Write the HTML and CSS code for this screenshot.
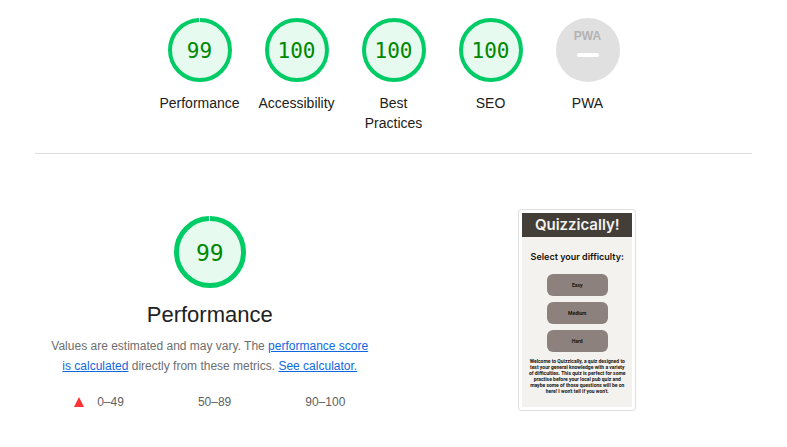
FILE: index.html
```
<!DOCTYPE html>
<html lang="en">
<head>
<meta charset="utf-8">
<title>Performance report</title>
<link rel="stylesheet" href="styles.css">
</head>
<body>
<main class="report">
  <nav class="scores" aria-label="Scores">
    <a class="score" href="#performance">
      <span class="gauge">
        <svg viewBox="0 0 64 64" aria-hidden="true"><circle class="disc" cx="32" cy="32" r="30"/><circle class="arc" cx="32" cy="32" r="30" pathLength="100" stroke-dasharray="99.5 0.5" transform="rotate(-90 32 32)"/></svg>
        <span class="value">99</span>
      </span>
      <span class="label">Performance</span>
    </a>
    <a class="score" href="#accessibility">
      <span class="gauge">
        <svg viewBox="0 0 64 64" aria-hidden="true"><circle class="disc" cx="32" cy="32" r="30"/><circle class="arc" cx="32" cy="32" r="30"/></svg>
        <span class="value">100</span>
      </span>
      <span class="label">Accessibility</span>
    </a>
    <a class="score" href="#best-practices">
      <span class="gauge">
        <svg viewBox="0 0 64 64" aria-hidden="true"><circle class="disc" cx="32" cy="32" r="30"/><circle class="arc" cx="32" cy="32" r="30"/></svg>
        <span class="value">100</span>
      </span>
      <span class="label">Best Practices</span>
    </a>
    <a class="score" href="#seo">
      <span class="gauge">
        <svg viewBox="0 0 64 64" aria-hidden="true"><circle class="disc" cx="32" cy="32" r="30"/><circle class="arc" cx="32" cy="32" r="30"/></svg>
        <span class="value">100</span>
      </span>
      <span class="label">SEO</span>
    </a>
    <a class="score" href="#pwa">
      <span class="gauge pwa">
        <span class="pwa-mark">PWA</span>
        <span class="pwa-dash"></span>
      </span>
      <span class="label">PWA</span>
    </a>
  </nav>

  <section class="category" id="performance">
    <div class="summary">
      <span class="gauge large">
        <svg viewBox="0 0 72 72" aria-hidden="true"><circle class="disc" cx="36" cy="36" r="33"/><circle class="arc" cx="36" cy="36" r="33.5" pathLength="100" stroke-dasharray="99.5 0.5" transform="rotate(-90 36 36)"/></svg>
        <span class="value">99</span>
      </span>
      <h1>Performance</h1>
      <p class="description">Values are estimated and may vary. The <a href="#score">performance score is calculated</a> directly from these metrics. <a href="#calculator">See calculator.</a></p>
      <div class="legend">
        <span class="range"><svg class="marker" viewBox="0 0 10 10" aria-hidden="true"><path d="M5 0 10 10H0z"/></svg>0–49</span>
        <span class="range"><span class="marker"></span>50–89</span>
        <span class="range"><span class="marker"></span>90–100</span>
      </div>
    </div>
    <div class="preview">
      <div class="frame">
        <div class="screen">
          <div class="banner">Quizzically!</div>
          <h2>Select your difficulty:</h2>
          <div class="options">
            <button type="button">Easy</button>
            <button type="button">Medium</button>
            <button type="button">Hard</button>
          </div>
          <p class="welcome">Welcome to Quizzically, a quiz designed to<br>test your general knowledge with a variety<br>of difficulties. This quiz is perfect for some<br>practise before your local pub quiz and<br>maybe some of those questions will be on<br>here! I won't tell if you won't.</p>
        </div>
      </div>
    </div>
  </section>
</main>
</body>
</html>
```
FILE: styles.css
```
* { box-sizing: border-box; }
body {
  margin: 0;
  background: #fff;
  color: #212121;
  font-family: "Liberation Sans", Arial, sans-serif;
}
.report { padding: 18px 35px; }
.scores {
  display: flex;
  justify-content: center;
  padding-bottom: 20px;
  border-bottom: 1px solid #dedede;
}
.score {
  display: flex;
  flex-direction: column;
  align-items: center;
  width: 97px;
  color: inherit;
  text-decoration: none;
}
.gauge {
  display: grid;
  place-items: center;
  width: 64px;
  height: 64px;
}
.gauge > * { grid-area: 1 / 1; }
.gauge svg { width: 100%; height: 100%; }
.disc { fill: #e6faf0; }
.arc { fill: none; stroke: #0c6; stroke-width: 4; }
.value {
  padding-top: 2px;
  color: #080;
  font-family: "DejaVu Sans Mono", monospace;
  font-size: 21px;
  line-height: 24px;
}
.label {
  width: 80px;
  margin-top: 11px;
  display: flex;
  justify-content: center;
  font-size: 14px;
  line-height: 20px;
  text-align: center;
}
.pwa {
  display: flex;
  flex-direction: column;
  align-items: center;
  gap: 11px;
  padding-top: 12px;
  border-radius: 50%;
  background: #e0e0e0;
}
.pwa-mark {
  color: #b3b3b3;
  font-size: 12px;
  font-weight: 700;
  line-height: 12px;
}
.pwa-dash {
  width: 22px;
  height: 4px;
  border-radius: 2px;
  background: #fff;
}
.category {
  display: grid;
  grid-template-columns: 1fr 1fr;
  gap: 18px;
  padding-top: 55px;
}
.summary {
  display: flex;
  flex-direction: column;
  align-items: center;
  padding: 7px 14px 0;
}
.large { width: 72px; height: 72px; }
.large .arc { stroke-width: 5; }
.large .value { font-size: 23px; }
h1 {
  margin: 13px 0 7px;
  font-size: 22px;
  font-weight: 400;
  line-height: 28px;
}
.description {
  margin: 0;
  color: #6e6e6e;
  font-size: 12px;
  line-height: 20px;
  text-align: center;
}
.description a { color: #1068e0; }
.legend {
  display: flex;
  gap: 51px;
  margin-top: 16px;
  color: #616161;
  font-size: 12px;
  line-height: 20px;
}
.range { display: flex; align-items: center; gap: 13px; }
.marker { width: 10px; height: 10px; fill: #f33; }
.preview { display: flex; justify-content: center; align-items: flex-start; }
.frame {
  padding: 3px;
  border: 1px solid #e0e0e0;
  border-radius: 3px;
  background: #fff;
}
.screen {
  width: 110px;
  padding-bottom: 13px;
  background: #f3f2ee;
  color: #16130f;
  font-family: Inter, sans-serif;
  text-align: center;
}
.banner {
  background: #433e38;
  color: #f3f2ee;
  font-size: 15px;
  font-weight: 600;
  line-height: 24px;
}
h2 {
  margin: 14px 0 11px;
  font-size: 9px;
  font-weight: 600;
  line-height: 12px;
  white-space: nowrap;
}
.options { display: flex; flex-direction: column; align-items: center; gap: 6px; }
.options button {
  width: 61px;
  height: 22px;
  padding: 0;
  border: 0;
  border-radius: 6px;
  background: #8c817c;
  color: #16130f;
  font: 700 5px/6px Roboto, sans-serif;
}
.welcome {
  margin: 6px 0 0;
  font-family: Roboto, sans-serif;
  font-size: 5px;
  font-weight: 700;
  line-height: 6px;
  white-space: nowrap;
}
```
